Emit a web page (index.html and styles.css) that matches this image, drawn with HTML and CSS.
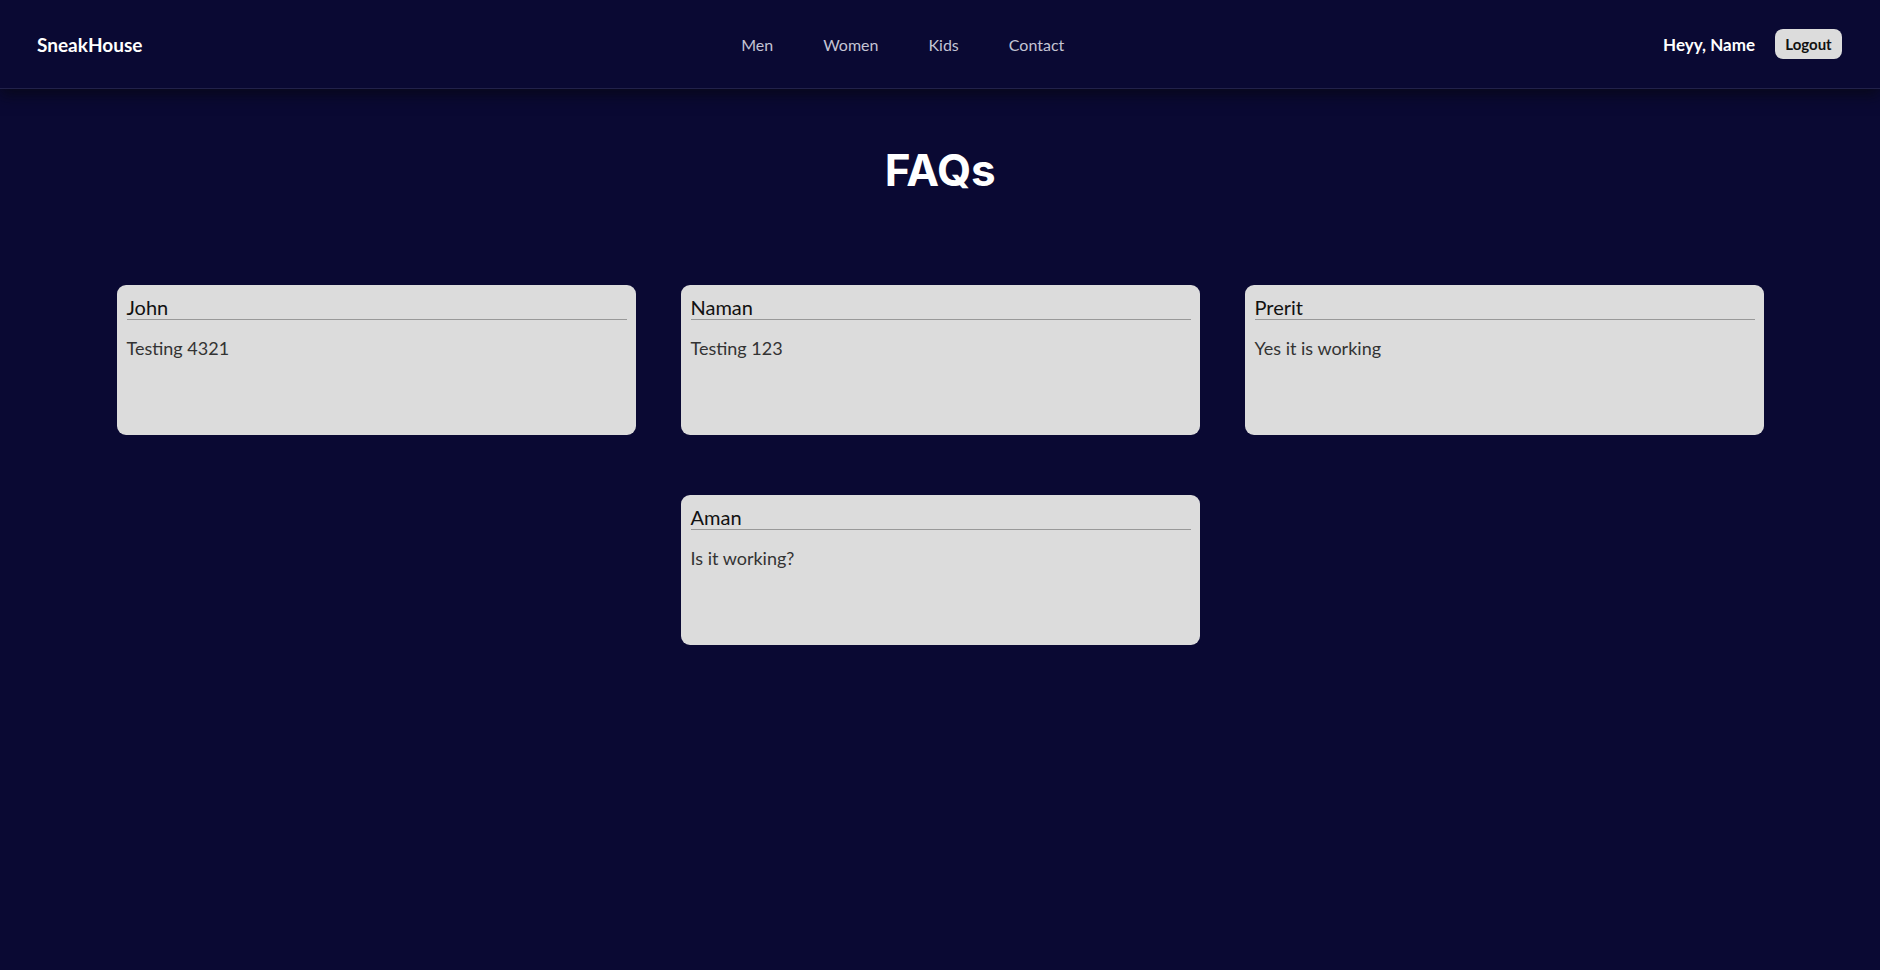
FILE: index.html
```html
<!DOCTYPE html>
<html lang="en">
<head>
<meta charset="utf-8">
<title>SneakHouse - FAQs</title>
<link rel="stylesheet" href="styles.css">
</head>
<body>
<header class="topbar">
  <a class="logo" href="#">SneakHouse</a>
  <nav class="nav">
    <a href="#">Men</a>
    <a href="#">Women</a>
    <a href="#">Kids</a>
    <a href="#">Contact</a>
  </nav>
  <div class="user">
    <span class="greet">Heyy, Name</span>
    <button class="logout">Logout</button>
  </div>
</header>
<main class="main">
  <h1 class="title">FAQs</h1>
  <section class="cards">
    <article class="card">
      <h2 class="card-name">John</h2>
      <p class="card-text">Testing 4321</p>
    </article>
    <article class="card">
      <h2 class="card-name">Naman</h2>
      <p class="card-text">Testing 123</p>
    </article>
    <article class="card">
      <h2 class="card-name">Prerit</h2>
      <p class="card-text">Yes it is working</p>
    </article>
    <article class="card">
      <h2 class="card-name">Aman</h2>
      <p class="card-text">Is it working?</p>
    </article>
  </section>
</main>
</body>
</html>
```
FILE: styles.css
```css
* { box-sizing: border-box; }
html, body {
  margin: 0;
  padding: 0;
  background: #0a0933;
  min-height: 100%;
}
body {
  font-family: "Lato", "Open Sans", sans-serif;
  color: #fff;
  min-height: 970px;
}
a { text-decoration: none; color: inherit; }

.topbar {
  height: 89px;
  display: flex;
  align-items: center;
  justify-content: space-between;
  padding: 0 38px 0 37px;
  border-bottom: 1px solid #22224a;
  box-shadow: 0 6px 14px rgba(8, 8, 24, 0.9);
  position: relative;
}
.logo {
  font-weight: 700;
  font-size: 19px;
  color: #fff;
}
.nav {
  display: flex;
  gap: 50px;
}
.nav a {
  font-size: 16px;
  color: #c4c4d4;
}
.user {
  display: flex;
  align-items: center;
  gap: 20px;
}
.greet {
  font-weight: 700;
  font-size: 17px;
  color: #fff;
}
.logout {
  font-family: "Lato", sans-serif;
  font-weight: 700;
  font-size: 15px;
  color: #111;
  background: #dcdcdc;
  border: none;
  border-radius: 8px;
  height: 30px;
  padding: 0 8px;
  width: 67px;
}

.main {
  padding-top: 56px;
}
.title {
  margin: 0;
  text-align: center;
  font-family: "Inter", "Lato", sans-serif;
  font-weight: 700;
  font-size: 44px;
  line-height: 50px;
  color: #fff;
  letter-spacing: -0.3px;
}
.cards {
  margin-top: 90px;
  display: flex;
  flex-wrap: wrap;
  justify-content: center;
  column-gap: 45px;
  row-gap: 60px;
  padding: 0 100px;
}
.card {
  width: 519px;
  height: 150px;
  background: #dcdcdc;
  border-radius: 9px;
  padding: 10px 9px 10px 10px;
}
.card-name {
  margin: 0;
  font-weight: 400;
  font-size: 20px;
  line-height: 24px;
  color: #111;
  border-bottom: 1px solid #999;
}
.card-text {
  margin: 16px 0 0;
  font-weight: 400;
  font-size: 18px;
  line-height: 24px;
  color: #333;
}
```
